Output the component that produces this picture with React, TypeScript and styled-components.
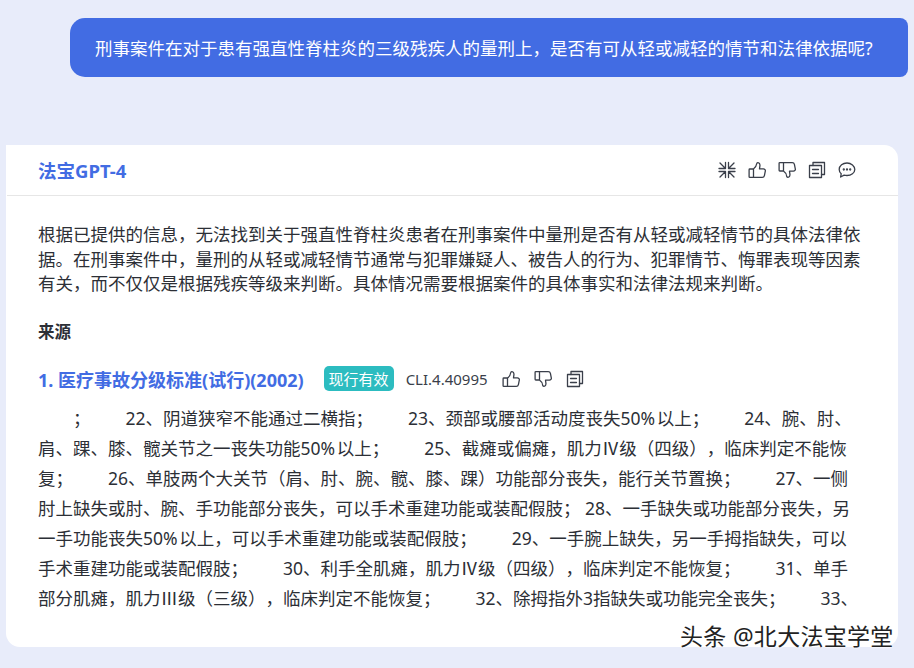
import React from "react";
import styled, { createGlobalStyle } from "styled-components";

const GlobalStyle = createGlobalStyle`
  html, body {
    margin: 0;
    padding: 0;
    height: 100%;
    overflow: hidden;
    background: #e8ecfa;
    font-family: "Noto Sans", "Noto Sans CJK SC", sans-serif;
    text-spacing-trim: space-all;
  }
`;

const Page = styled.div`
  width: 914px;
  height: 668px;
  position: relative;
  display: flex;
  flex-direction: column;
  padding: 18px 6px 21px 6px;
  box-sizing: border-box;
  background: #e8ecfa;
  overflow: hidden;
`;

const Bubble = styled.div`
  align-self: flex-end;
  width: 838px;
  height: 59px;
  margin-bottom: 68px;
  box-sizing: border-box;
  padding-left: 25px;
  display: flex;
  align-items: center;
  background: #426ce3;
  color: #fff;
  font-size: 17.5px;
  border-radius: 15px 8px 8px 15px;
  white-space: nowrap;
`;

const Card = styled.div`
  width: 892px;
  flex: 1;
  background: #fff;
  border-radius: 0 14px 14px 14px;
  box-sizing: border-box;
  overflow: hidden;
`;

const CardHeader = styled.div`
  height: 50px;
  margin-left: 1px;
  padding: 0 42px 0 31px;
  display: flex;
  align-items: center;
  justify-content: space-between;
  border-bottom: 1px solid #e6e6e6;
`;

const ModelName = styled.div`
  font-size: 18.5px;
  font-weight: 700;
  color: #426ce3;
`;

const IconRow = styled.div<{ $gap: number }>`
  display: flex;
  align-items: center;
  gap: ${(p) => p.$gap}px;
  color: #3a3f4a;
`;

const Icon = styled.svg`
  width: 18px;
  height: 18px;
  fill: none;
  stroke: currentColor;
  stroke-width: 1.3;
  stroke-linejoin: round;
  stroke-linecap: round;
  display: block;
`;

const Body = styled.div`
  padding: 26px 30px 0 32px;
  color: #2c2f36;
`;

const Answer = styled.div`
  font-size: 17.5px;
  line-height: 24.6px;
  white-space: nowrap;
`;

const SourcesTitle = styled.div`
  margin-top: 24px;
  font-size: 16.5px;
  line-height: 24px;
  font-weight: 700;
  color: #2c2f36;
`;

const SourceRow = styled.div`
  margin-top: 23px;
  height: 24px;
  display: flex;
  align-items: center;
`;

const SourceTitle = styled.div`
  font-size: 18px;
  font-weight: 700;
  color: #426ce3;
  white-space: nowrap;
  margin-right: 20px;
`;

const Badge = styled.div`
  height: 25px;
  width: 70px;
  border-radius: 5px;
  background: #2cbcc0;
  color: #fff;
  font-size: 15px;
  display: flex;
  align-items: center;
  justify-content: center;
  margin-right: 12px;
`;

const Cli = styled.div`
  font-size: 15px;
  color: #3a3f4a;
  margin-right: 14px;
`;

const Excerpt = styled.div`
  margin: 12px 0 0;
  font-size: 17.5px;
  line-height: 30px;
  white-space: pre;
  color: #2c2f36;
`;

const Roman = styled.span`
  font-family: "Noto Sans CJK SC", sans-serif;
`;

const Watermark = styled.div`
  position: absolute;
  left: 680px;
  top: 618px;
  font-size: 23px;
  letter-spacing: 0.3px;
  color: #222;
  white-space: nowrap;
  text-shadow: 0 0 2px #fff, 0 0 2px #fff, 0 0 3px #fff;
`;

const Collapse = () => (
  <Icon viewBox="0 0 18 18">
    <path d="M1 7.500h6.500V1.500M17 7.500h-6.500V1.500M1 10.500h6.500V16.500M17 10.500h-6.500V16.500M2 2l5 5M16 2l-5 5M2 16l5-5M16 16l-5-5" />
  </Icon>
);

const ThumbUp = () => (
  <Icon viewBox="0 0 18 18">
    <path d="M5.500 8h-3.700c-.4 0-.7.3-.7.7v7c0 .4.300.7.700.7h3.700M5.500 8v8.400h8.700c1.200 0 2-.7 2.200-1.700l.9-4.500c.3-1.300-.6-2.300-1.900-2.300h-3.900l.4-3.100c.2-1.600-.6-3-1.900-3.200-.8-.1-1.200.4-1.300 1.200-.2 2-1.400 3.900-3.500 5.400H5.500z" />
  </Icon>
);

const ThumbDown = () => (
  <Icon viewBox="0 0 18 18">
    <path d="M5.500 10h-3.700c-.4 0-.7-.3-.7-.7v-7c0-.4.300-.7.700-.7h3.700M5.500 10V1.600h8.700c1.200 0 2 .7 2.200 1.700l.9 4.500c.3 1.300-.6 2.300-1.900 2.300h-3.900l.4 3.100c.2 1.600-.6 3-1.900 3.200-.8.100-1.200-.4-1.300-1.200-.2-2-1.400-3.900-3.500-5.400H5.500z" />
  </Icon>
);

const Copy = () => (
  <Icon viewBox="0 0 18 18">
    <path d="M5 4.500V1.500h11.500v12H13.500" />
    <rect x="1.500" y="4.500" width="12" height="12" />
    <path d="M4.500 8.500h6M4.500 12.500h6" />
  </Icon>
);

const Comment = () => (
  <Icon viewBox="0 0 18 18">
    <path d="M9 2C4.800 2 1.200 4.800 1.200 8.500c0 1.700.8 3.200 2 4.300L2.600 16l3.500-1.900c.9.300 1.900.4 2.900.4 4.200 0 7.800-2.700 7.800-6S13.200 2 9 2z" />
    <circle cx="5.800" cy="8.500" r=".5" />
    <circle cx="9" cy="8.500" r=".5" />
    <circle cx="12.200" cy="8.500" r=".5" />
  </Icon>
);

const answerLines = [
  "根据已提供的信息，无法找到关于强直性脊柱炎患者在刑事案件中量刑是否有从轻或减轻情节的具体法律依",
  "据。在刑事案件中，量刑的从轻或减轻情节通常与犯罪嫌疑人、被告人的行为、犯罪情节、悔罪表现等因素",
  "有关，而不仅仅是根据残疾等级来判断。具体情况需要根据案件的具体事实和法律法规来判断。",
];

const excerptLines = [
  "\u2003\u2003；\u2003\u200322、阴道狭窄不能通过二横指；\u2003\u200323、颈部或腰部活动度丧失50%\u200a以上；\u2003\u200324、腕、肘、",
  "肩、踝、膝、髋关节之一丧失功能50%\u200a以上；\u2003\u200325、截瘫或偏瘫，肌力Ⅳ级（四级），临床判定不能恢",
  "复；\u2003\u200326、单肢两个大关节（肩、肘、腕、髋、膝、踝）功能部分丧失，能行关节置换；\u2003\u200327、一侧",
  "肘上缺失或肘、腕、手功能部分丧失，可以手术重建功能或装配假肢； 28、一手缺失或功能部分丧失，另",
  "一手功能丧失50%\u200a以上，可以手术重建功能或装配假肢；\u2003\u200329、一手腕上缺失，另一手拇指缺失，可以",
  "手术重建功能或装配假肢；\u2003\u200330、利手全肌瘫，肌力Ⅳ级（四级），临床判定不能恢复；\u2003\u200331、单手",
  "部分肌瘫，肌力Ⅲ级（三级），临床判定不能恢复；\u2003\u200332、除拇指外3指缺失或功能完全丧失；\u2003\u200333、",
];

// roman numerals need the CJK font to stay one em wide
const renderLine = (line: string) =>
  line.split(/([ⅢⅣ])/).map((part, i) =>
    part === "Ⅲ" || part === "Ⅳ" ? <Roman key={i}>{part}</Roman> : part
  );

export default function App() {
  return (
    <Page>
      <GlobalStyle />
      <Bubble>刑事案件在对于患有强直性脊柱炎的三级残疾人的量刑上，是否有可从轻或减轻的情节和法律依据呢?</Bubble>
      <Card>
        <CardHeader>
          <ModelName>法宝GPT-4</ModelName>
          <IconRow $gap={12}>
            <Collapse />
            <ThumbUp />
            <ThumbDown />
            <Copy />
            <Comment />
          </IconRow>
        </CardHeader>
        <Body>
          <Answer>
            {answerLines.map((line) => (
              <div key={line}>{line}</div>
            ))}
          </Answer>
          <SourcesTitle>来源</SourcesTitle>
          <SourceRow>
            <SourceTitle>1. 医疗事故分级标准(试行)(2002)</SourceTitle>
            <Badge>现行有效</Badge>
            <Cli>CLI.4.40995</Cli>
            <IconRow $gap={14}>
              <ThumbUp />
              <ThumbDown />
              <Copy />
            </IconRow>
          </SourceRow>
          <Excerpt>
            {excerptLines.map((line) => (
              <div key={line}>{renderLine(line)}</div>
            ))}
          </Excerpt>
        </Body>
      </Card>
      <Watermark>头条 @北大法宝学堂</Watermark>
    </Page>
  );
}
